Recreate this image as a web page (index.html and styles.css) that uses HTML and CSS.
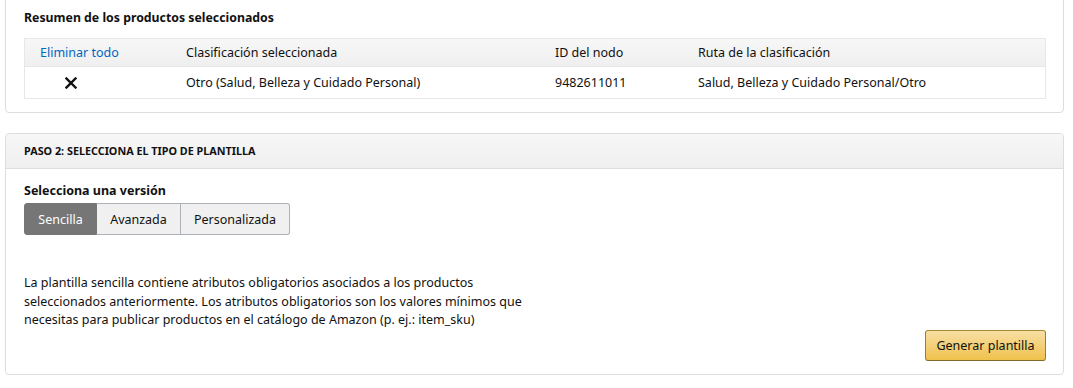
FILE: index.html
```html
<!DOCTYPE html>
<html lang="es">
<head>
  <meta charset="UTF-8" />
  <meta name="viewport" content="width=device-width, initial-scale=1.0" />
  <title>Plantilla de inventario</title>
  <link rel="stylesheet" href="styles.css">
</head>
<body>
  <div class="page">
    <div class="card summary">
      <h3 class="summary-title">Resumen de los productos seleccionados</h3>
      <div class="table">
        <div class="row head">
          <div class="cell first"><a href="#" class="link">Eliminar todo</a></div>
          <div class="cell">Clasificación seleccionada</div>
          <div class="cell">ID del nodo</div>
          <div class="cell">Ruta de la clasificación</div>
        </div>
        <div class="row">
          <div class="cell first">
            <svg class="remove" width="12" height="12" viewBox="0 0 12 12">
              <path d="M1.5 1.5 L10.5 10.5 M10.5 1.5 L1.5 10.5" stroke="#111" stroke-width="2.4" stroke-linecap="square" />
            </svg>
          </div>
          <div class="cell">Otro (Salud, Belleza y Cuidado Personal)</div>
          <div class="cell">9482611011</div>
          <div class="cell">Salud, Belleza y Cuidado Personal/Otro</div>
        </div>
      </div>
    </div>

    <div class="card step">
      <div class="card-header">PASO 2: SELECCIONA EL TIPO DE PLANTILLA</div>
      <div class="card-body">
        <div class="label">Selecciona una versión</div>
        <div class="segmented">
          <button class="seg active">Sencilla</button>
          <button class="seg">Avanzada</button>
          <button class="seg">Personalizada</button>
        </div>
        <p class="description">La plantilla sencilla contiene atributos obligatorios asociados a los productos seleccionados anteriormente. Los atributos obligatorios son los valores mínimos que necesitas para publicar productos en el catálogo de Amazon (p. ej.: item_sku)</p>
        <div class="actions">
          <button class="primary-btn">Generar plantilla</button>
        </div>
      </div>
    </div>
  </div>
</body>
</html>
```

FILE: styles.css
```css
:root {
  --text: #111;
  --border: #dddddd;
  --link: #0066c0;
}

* {
  box-sizing: border-box;
}

body {
  margin: 0;
  font-family: 'Noto Sans', 'Open Sans', Arial, sans-serif;
  font-size: 12.5px;
  line-height: 18px;
  color: var(--text);
  background: #fff;
}

.page {
  margin-top: -8px;
  padding: 0 9px 0 5px;
}

.card {
  border: 1px solid var(--border);
  border-radius: 4px;
  background: #fff;
}

.summary {
  padding: 16px 17px 13px 18px;
  margin-bottom: 20px;
}

.summary-title {
  margin: 0 0 11px;
  font-size: 12.3px;
  line-height: 18px;
  font-weight: bold;
}

.table {
  border: 1px solid #e7e7e7;
}

.row {
  display: grid;
  grid-template-columns: 161px 369px 143px 1fr;
  align-items: center;
  height: 31px;
}

.row.head {
  height: 28px;
  background: linear-gradient(#f7f7f7, #efefef);
  border-bottom: 1px solid #e7e7e7;
}

.cell.first {
  padding-left: 15px;
}

.row:not(.head) .cell.first {
  padding-left: 40px;
  display: flex;
  align-items: center;
}

.link {
  color: var(--link);
  text-decoration: none;
}

.card-header {
  height: 35px;
  padding: 0 18px;
  display: flex;
  align-items: center;
  background: linear-gradient(#f7f7f7, #efefef);
  border-bottom: 1px solid var(--border);
  border-radius: 4px 4px 0 0;
  font-size: 10.8px;
  font-weight: bold;
}

.card-body {
  padding: 13px 17px 13px 18px;
}

.label {
  font-weight: bold;
}

.segmented {
  display: flex;
  margin-top: 3px;
  height: 32px;
}

.seg {
  font-family: inherit;
  font-size: 12.5px;
  color: var(--text);
  background: #f0f0f0;
  border: 1px solid #adb1b8;
  border-left: none;
  padding: 0 10px;
  cursor: pointer;
}

.seg:first-child {
  border-left: 1px solid #adb1b8;
  border-radius: 3px 0 0 3px;
}

.seg:last-child {
  border-radius: 0 3px 3px 0;
}

.seg.active {
  background: #767676;
  border-color: #767676;
  color: #fff;
  width: 73px;
}

.seg:nth-child(2) {
  width: 84px;
}

.seg:nth-child(3) {
  width: 109px;
}

.description {
  margin: 39px 0 0;
  max-width: 512px;
  line-height: 18.5px;
}

.actions {
  display: flex;
  justify-content: flex-end;
}

.primary-btn {
  width: 121px;
  height: 31px;
  font-family: inherit;
  font-size: 12.5px;
  color: var(--text);
  background: linear-gradient(#f7dfa5, #f0c14b);
  border: 1px solid;
  border-color: #a88734 #9c7e31 #846a29;
  border-radius: 3px;
  cursor: pointer;
}
```
